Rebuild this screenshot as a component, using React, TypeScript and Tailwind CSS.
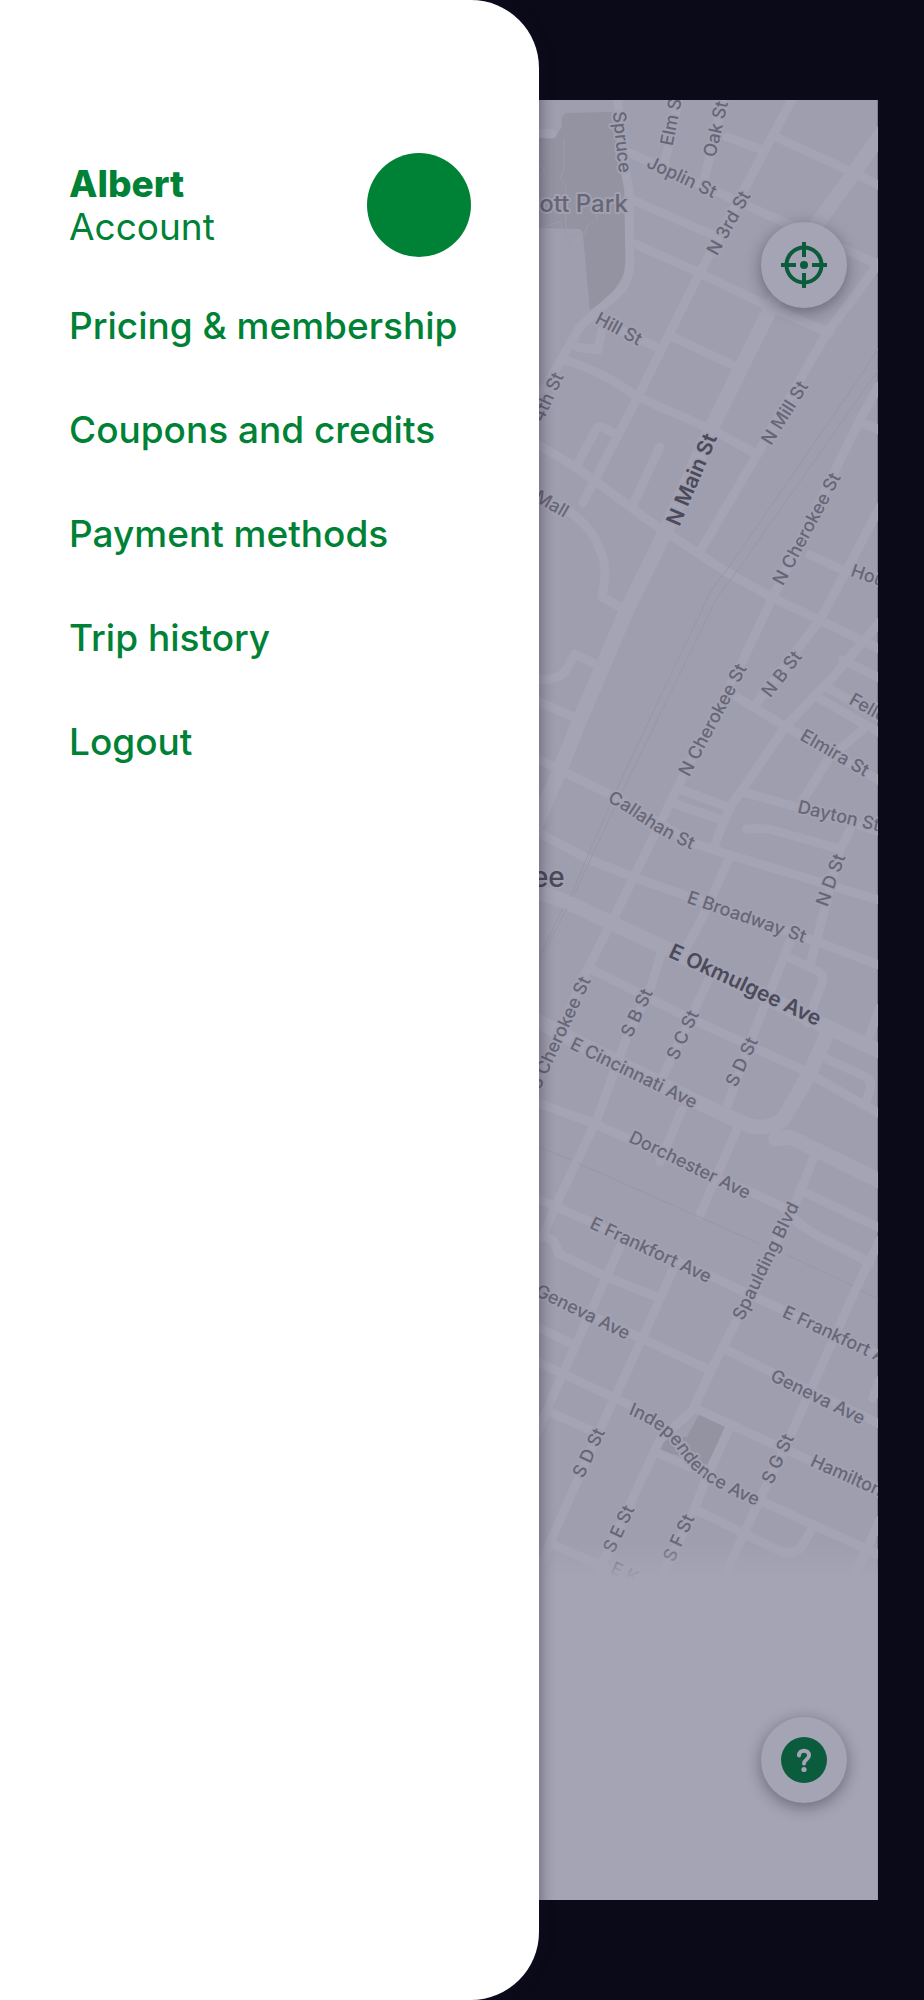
import React from 'react'

interface StreetLabel {
  text: string;
  x: number;
  y: number;
  angle: number;
  anchor?: "start" | "middle" | "end";
}

const menuItems = [
  "Pricing & membership",
  "Coupons and credits",
  "Payment methods",
  "Trip history",
  "Logout",
];

const minorRoads = [
  "M618 100L622 150L629 190L630 260Q630 282 618 293L580 327L565 353L543 392",
  "M630 153L873 262",
  "M663 170L680 96",
  "M703 186L724 96",
  "M727 137L763 150",
  "M794 96L700 273L638 397L583 503",
  "M776 137L863 177L882 187",
  "M633 200L717 237",
  "M633 243L700 273L770 307L830 333",
  "M880 262L827 333L760 450L700 552",
  "M673 337L737 367",
  "M619 329L658 348",
  "M602 330L598 350L577 347",
  "M565 360Q600 370 638 397L713 430L753 452",
  "M536 133L552 134",
  "M536 443L580 470L658 527L727 572L773 598L820 620L882 650",
  "M577 465L596 430Q598 424 604 428L615 434",
  "M660 447L633 505",
  "M567 510Q592 526 600 550Q609 566 602 597L622 608",
  "M593 663L575 654L565 672Q558 680 536 680",
  "M879 386L860 420L775 593L743 660L680 783L613 920L587 970L536 1085",
  "M860 422L882 431",
  "M810 555L843 570",
  "M880 507L847 570L820 620L757 703",
  "M880 622L833 677L787 725L740 793Q728 808 715 845",
  "M843 660L882 679",
  "M737 697L783 725L882 782",
  "M817 697L882 734",
  "M827 687L882 719",
  "M863 730L830 757L803 800",
  "M743 792L797 807L882 832",
  "M747 829Q765 827 780 832L840 849",
  "M850 830L840 850L810 966",
  "M677 788L730 808",
  "M673 803L722 820",
  "M536 758L607 793L693 843L730 855L882 901",
  "M536 831L590 860L633 877L690 897L807 938L882 966",
  "M536 700L580 720",
  "M730 857L703 917L685 950",
  "M664 945L650 990L627 1037L597 1120L557 1203L543 1237",
  "M790 942L753 1035L727 1107",
  "M710 977L663 1077",
  "M788 957L818 971Q825 976 822 984L807 1023",
  "M593 970L683 1015L803 1070L882 1115",
  "M823 1057L866 1077Q873 1081 870 1090L865 1105",
  "M880 1008L870 1035",
  "M536 1102L593 1123L753 1193L783 1207Q800 1229 833 1243L870 1263",
  "M682 1110L660 1162",
  "M738 1127L700 1215",
  "M813 1160L797 1200L737 1320L710 1373L693 1410L660 1440L603 1562L598 1580",
  "M800 1190L882 1229",
  "M536 1198L593 1223L713 1277L783 1310L882 1356",
  "M880 1240L857 1287L790 1437L763 1493L723 1580",
  "M540 1236Q556 1236 558 1253L607 1277L657 1297",
  "M620 1247L550 1403L536 1436",
  "M673 1270L643 1337L600 1430L550 1543L536 1580",
  "M540 1292L630 1333L710 1370",
  "M727 1350L773 1373L882 1425",
  "M536 1326L570 1343",
  "M536 1361L630 1405",
  "M757 1499L882 1556",
  "M550 1412L597 1433",
  "M697 1409L780 1447L882 1492",
  "M730 1427L707 1477L693 1513L660 1580",
  "M658 1453L690 1467",
  "M697 1510L743 1533L780 1551Q797 1557 804 1543L813 1527",
  "M880 1520L853 1580",
  "M550 1543L610 1570",
  "M880 1380L873 1398",
];

const majorRoads = [
  "M886 128L813 230L770 310L712 427L665 533L627 610L580 720L560 770L536 825",
  "M536 891L567 902L663 947L827 1027L882 1052",
  "M536 1020L573 1040L693 1100L745 1124Q765 1132 783 1120L810 1073L830 1028",
  "M776 1139L790 1137L882 1182",
];

const railways = [
  "M880 346L858 380L727 570Q710 590 705 604L673 670L618 787L570 897M563 908L540 956",
  "M880 368L733 577Q716 597 711 610L682 670L623 790L573 897M567 908L540 962",
  "M536 1146L572 1160M578 1163L760 1244M785 1254L854 1286M860 1290L880 1300",
];

const streetLabels: StreetLabel[] = [
  { text: "Spruce", x: 622, y: 142, angle: 84 },
  { text: "Elm St", x: 672, y: 119, angle: -79 },
  { text: "Oak St", x: 716, y: 129, angle: -77 },
  { text: "Joplin St", x: 682, y: 177, angle: 25 },
  { text: "N 3rd St", x: 729, y: 223, angle: -61 },
  { text: "Hill St", x: 619, y: 329, angle: 28 },
  { text: "4th St", x: 548, y: 397, angle: -65 },
  { text: "N Mill St", x: 785, y: 413, angle: -58 },
  { text: "N Cherokee St", x: 807, y: 529, angle: -62 },
  { text: "Mall", x: 552, y: 504, angle: 30 },
  { text: "Houston St", x: 852, y: 570, angle: 19, anchor: "start" },
  { text: "N Cherokee St", x: 713, y: 720, angle: -62 },
  { text: "N B St", x: 782, y: 674, angle: -52 },
  { text: "Elmira St", x: 835, y: 753, angle: 30 },
  { text: "Fellows St", x: 851, y: 698, angle: 29, anchor: "start" },
  { text: "Dayton St", x: 839, y: 816, angle: 13 },
  { text: "N D St", x: 831, y: 880, angle: -70 },
  { text: "E Broadway St", x: 747, y: 917, angle: 19 },
  { text: "S Cherokee St", x: 560, y: 1033, angle: -65 },
  { text: "S B St", x: 637, y: 1013, angle: -65 },
  { text: "S C St", x: 683, y: 1035, angle: -65 },
  { text: "S D St", x: 742, y: 1062, angle: -65 },
  { text: "E Cincinnati Ave", x: 634, y: 1073, angle: 26 },
  { text: "Dorchester Ave", x: 690, y: 1165, angle: 26 },
  { text: "Spaulding Blvd", x: 766, y: 1261, angle: -64 },
  { text: "E Frankfort Ave", x: 651, y: 1250, angle: 25 },
  { text: "E Frankfort Ave", x: 784, y: 1311, angle: 25, anchor: "start" },
  { text: "Geneva Ave", x: 583, y: 1312, angle: 26 },
  { text: "Geneva Ave", x: 818, y: 1397, angle: 26 },
  { text: "S D St", x: 589, y: 1453, angle: -65 },
  { text: "S E St", x: 619, y: 1529, angle: -65 },
  { text: "S F St", x: 679, y: 1538, angle: -65 },
  { text: "S G St", x: 778, y: 1459, angle: -65 },
  { text: "Hamilton Ave", x: 812, y: 1460, angle: 24, anchor: "start" },
  { text: "E K", x: 625, y: 1573, angle: 25 },
];

const avenueLabels: StreetLabel[] = [
  { text: "N Main St", x: 693, y: 480, angle: -67 },
  { text: "E Okmulgee Ave", x: 745, y: 986, angle: 25 },
];

const MapLabel: React.FC<{ label: StreetLabel }> = ({ label }) => (
  <text
    transform={`translate(${label.x} ${label.y}) rotate(${label.angle})`}
    dy="6"
    textAnchor={label.anchor ?? "middle"}
  >
    {label.text}
  </text>
);

const CityMap = () => (
  <svg
    className="absolute inset-0 h-full w-full"
    viewBox="0 100 878 1800"
    preserveAspectRatio="xMaxYMin slice"
    role="img"
    aria-label="City map"
  >
    <defs>
      <linearGradient id="fade" x1="0" y1="0" x2="0" y2="1">
        <stop offset="0" stopColor="#a5a4b4" stopOpacity="0" />
        <stop offset="1" stopColor="#a5a4b4" />
      </linearGradient>
      <path id="callahan" d="M607 802C630 810 646 832 700 853" />
      <path id="independence" d="M628 1414C650 1423 667 1434 680 1453S705 1485 764 1509" />
    </defs>
    <rect y="100" width="878" height="1800" fill="#9f9eae" />

    {/* parks */}
    <path d="M536 138H555L562 127V117L566 113L612 112L620 150L627 190V270L610 297L590 310L583 233L580 229L536 228Z" fill="#9493a2" />
    <path d="M700 1413L727 1424L708 1465L660 1450L665 1437H687Z" fill="#9493a2" />
    <path
      d="M564 139V170L560 178L566 186V232M540 165L545 170L540 177M596 215L598 220L587 226L585 234L566 236L560 222L540 228M566 236L572 252"
      fill="none"
      stroke="#9d9cac"
    />

    <g fill="none" stroke="#a5a4b4" strokeLinecap="round" strokeLinejoin="round">
      <g strokeWidth="9">
        {minorRoads.map((d) => <path key={d} d={d} />)}
      </g>
      <g strokeWidth="15">
        {majorRoads.map((d) => <path key={d} d={d} />)}
      </g>
    </g>
    <g fill="none" stroke="#9897a7">
      {railways.map((d) => <path key={d} d={d} />)}
    </g>

    <g
      className="font-['Inter',sans-serif] text-[18px] font-medium [paint-order:stroke]"
      fill="#676677"
      stroke="#a2a1b1"
      strokeWidth="4"
      strokeLinejoin="round"
    >
      {streetLabels.map((label) => (
        <MapLabel key={`${label.text}-${label.x}`} label={label} />
      ))}
      <text><textPath href="#callahan">Callahan St</textPath></text>
      <text><textPath href="#independence">Independence Ave</textPath></text>
      <text x="628" y="212" textAnchor="end" className="text-[24px]">ott Park</text>
      <g fill="#4b4a5b" className="text-[21px] font-semibold">
        {avenueLabels.map((label) => (
          <MapLabel key={label.text} label={label} />
        ))}
      </g>
      <text x="565" y="887" textAnchor="end" fill="#4b4a5b" className="text-[28px]">ee</text>
    </g>

    <rect y="1540" width="878" height="40" fill="url(#fade)" />
    <rect y="1580" width="878" height="320" fill="#a5a4b4" />
  </svg>
);

const LocateIcon = () => (
  <svg width="46" height="46" viewBox="0 0 46 46" fill="none" stroke="currentColor" strokeWidth="4">
    <circle cx="23" cy="23" r="17.5" />
    <circle cx="23" cy="23" r="4" fill="currentColor" stroke="none" />
    <path d="M23 0V15M23 31V46M0 23H15M31 23H46" />
  </svg>
);

const HelpIcon = () => (
  <svg width="46" height="46" viewBox="0 0 46 46" fill="none">
    <circle cx="23" cy="23" r="23" fill="currentColor" />
    <path
      d="M18 18.5C18 12 28 12 28 18.5C28 22.5 23 22.5 23 26.5"
      stroke="#a5a4b4"
      strokeWidth="4"
      strokeLinecap="round"
    />
    <circle cx="23" cy="32.5" r="2.6" fill="#a5a4b4" />
  </svg>
);

const RoundButton: React.FC<{ label: string; children: React.ReactNode }> = ({ label, children }) => (
  <button
    aria-label={label}
    className="flex size-[86px] items-center justify-center rounded-full bg-[#a5a4b4] text-[#0b5c3c] shadow-[0_4px_16px_rgba(20,18,40,0.4)]"
  >
    {children}
  </button>
);

const App = () => {
  return (
    <div className="relative flex min-h-screen flex-col bg-[#0a0a19] py-[100px] pr-[5%] font-['Inter',sans-serif]">
      <main className="relative flex flex-1 overflow-hidden">
        <CityMap />
        <div className="relative ml-auto flex flex-col justify-between pt-[122px] pr-[31px] pb-[97px]">
          <RoundButton label="Center map on my location">
            <LocateIcon />
          </RoundButton>
          <RoundButton label="Help">
            <HelpIcon />
          </RoundButton>
        </div>
      </main>

      <aside className="absolute inset-y-0 left-0 w-7/12 rounded-r-[68px] bg-white pt-[153px] pr-[68px] pl-[69px] text-[37px] leading-[43px] text-[#008236] shadow-[2px_0_14px_rgba(20,18,40,0.4)]">
        <a href="#account" className="flex items-center justify-between">
          <div>
            <div className="font-extrabold">Albert</div>
            <div>Account</div>
          </div>
          <div className="size-[104px] rounded-full bg-[#008236]" />
        </a>
        <nav className="mt-[47px] flex flex-col items-start gap-[61px] font-medium whitespace-nowrap">
          {menuItems.map((item) => (
            <button key={item}>{item}</button>
          ))}
        </nav>
      </aside>
    </div>
  );
}

export default App;
